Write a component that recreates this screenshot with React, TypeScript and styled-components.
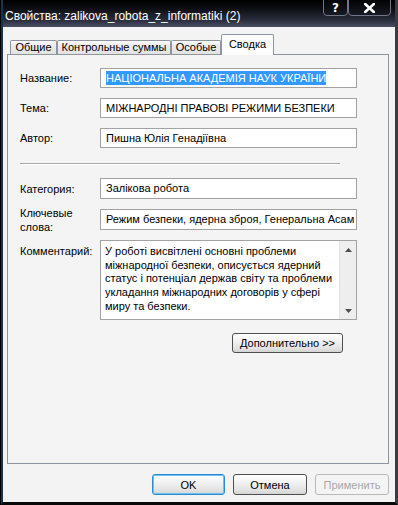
import React from 'react';
import styled, { createGlobalStyle } from 'styled-components';

const Global = createGlobalStyle`
  html, body { margin: 0; padding: 0; background: #000; }
  body {
    width: 398px; height: 505px; overflow: hidden;
    font-family: "Liberation Sans", Arial, sans-serif;
  }
  * { box-sizing: border-box; }
`;

const Win = styled.div`
  width: 398px;
  height: 505px;
  display: flex;
  flex-direction: column;
  background: #000;
  padding-left: 1px;
`;

const Frame = styled.div`
  flex: 1;
  display: flex;
  flex-direction: column;
  border-left: 2px solid #123650;
  border-right: 3px solid #3b3c40;
  border-bottom: 3px solid #0a0a0a;
  min-height: 0;
`;

const TitleBar = styled.div`
  height: 27px;
  flex: none;
  display: flex;
  align-items: flex-start;
  background: linear-gradient(#000 0%, #0c0d12 30%, #2a2d3c 75%, #4a4f66 100%);
  overflow: hidden;
`;

const TitleText = styled.div`
  flex: 1;
  padding: 9px 0 0 2px;
  font-size: 12px;
  line-height: 14px;
  color: #fff;
  white-space: nowrap;
`;

const CaptionGroup = styled.div`
  display: flex;
  margin-top: -3px;
  margin-right: 4px;
`;

const CaptionBtn = styled.div<{ $w: number }>`
  width: ${p => p.$w}px;
  height: 19px;
  display: flex;
  align-items: center;
  justify-content: center;
  padding-top: 3px;
  border: 1px solid #70758a;
  border-radius: 0 0 4px 4px;
  background: linear-gradient(#000, #181a24);
  color: #fff;
  font-family: "DejaVu Sans", sans-serif;
  font-weight: bold;
  font-size: 12px;
`;

const Client = styled.div`
  flex: 1;
  display: flex;
  flex-direction: column;
  background: #f3f3f3;
  padding: 7px 6px 7px 4px;
  min-height: 0;
`;

const TabStrip = styled.div`
  display: flex;
  align-items: flex-end;
  height: 20px;
  padding-left: 3px;
  position: relative;
  z-index: 1;
`;

const Tab = styled.div<{ $w: number; $active?: boolean }>`
  width: ${p => p.$w}px;
  height: ${p => (p.$active ? 21 : 14)}px;
  margin-bottom: ${p => (p.$active ? -1 : 0)}px;
  display: flex;
  justify-content: center;
  align-items: ${p => (p.$active ? 'flex-start' : 'center')};
  padding-top: ${p => (p.$active ? 3 : 0)}px;
  font-size: 11px;
  line-height: 13px;
  color: #000;
  border: 1px solid #8f95a0;
  border-bottom: none;
  border-radius: 2px 2px 0 0;
  background: ${p => (p.$active ? '#fcfcfc' : 'linear-gradient(#ffffff, #ededed 30%, #e2e2e2)')};
  white-space: nowrap;
`;

const Panel = styled.div`
  flex: 1;
  border: 1px solid #8f95a0;
  background: #f4f4f4;
  padding: 13px 0 0 12px;
  display: flex;
  flex-direction: column;
`;

const FieldGrid = styled.div`
  display: grid;
  grid-template-columns: 80px 257px;
  grid-auto-rows: 20px;
  row-gap: 10px;
  align-items: center;
`;

const Label = styled.div<{ $top?: number }>`
  font-size: 11px;
  line-height: 14px;
  color: #000;
  margin-top: ${p => p.$top ?? 0}px;
`;

const Field = styled.div<{ $h?: number; $top?: number }>`
  width: 257px;
  height: ${p => p.$h ?? 20}px;
  margin-top: ${p => p.$top ?? 0}px;
  border: 1px solid #a2a2a2;
  background: #fff;
  font-size: 11px;
  line-height: ${p => (p.$h ?? 20) - 2}px;
  padding: 0 5px;
  color: #000;
  white-space: nowrap;
  overflow: hidden;
`;

const Selected = styled.span`
  background: #3399ff;
  color: #fff;
  padding: 1px 0;
`;

const Separator = styled.div`
  width: 320px;
  height: 2px;
  margin: 15px 0 13px 0;
  border-top: 1px solid #a8a8a8;
  border-bottom: 1px solid #fff;
`;

const Row = styled.div<{ $top?: number; $align?: string }>`
  display: flex;
  align-items: ${p => p.$align ?? 'center'};
  margin-top: ${p => p.$top ?? 0}px;
`;

const LabelCell = styled.div`
  width: 80px;
  flex: none;
`;

const Memo = styled.div`
  width: 257px;
  height: 80px;
  border: 1px solid #a2a2a2;
  background: #fff;
  display: flex;
`;

const MemoText = styled.div`
  flex: 1;
  padding: 4px 0 0 4px;
  font-size: 11px;
  line-height: 13.7px;
  color: #000;
  white-space: nowrap;
  overflow: hidden;
`;

const ScrollBar = styled.div`
  width: 17px;
  flex: none;
  background: #eeeeee;
  border-left: 1px solid #e2e2e2;
  display: flex;
  flex-direction: column;
  justify-content: space-between;
  align-items: center;
  padding: 7px 0 6px 0;
`;

const MoreRow = styled.div`
  width: 337px;
  display: flex;
  justify-content: flex-end;
  padding-right: 14px;
  margin-top: 13px;
`;

const Btn = styled.button<{ $w: number; $kind?: 'default' | 'normal' | 'disabled' }>`
  width: ${p => p.$w}px;
  height: ${p => (p.$kind === undefined ? 20 : 21)}px;
  padding: 0;
  font-family: "Liberation Sans", Arial, sans-serif;
  font-size: 11px;
  border-radius: 3px;
  color: ${p => (p.$kind === 'disabled' ? '#a7a7a7' : '#000')};
  border: 1px solid
    ${p => (p.$kind === 'default' ? '#2a8bd0' : p.$kind === 'disabled' ? '#b9b9b9' : '#4f4f4f')};
  box-shadow: ${p => (p.$kind === 'default' ? 'inset 0 0 0 1px #6cc2f7' : 'none')};
  background: ${p =>
    p.$kind === 'disabled' ? '#f4f4f4' : 'linear-gradient(#ffffff, #f2f2f2 40%, #e2e2e2 80%, #d4d4d4)'};
`;

const ButtonBar = styled.div`
  display: flex;
  justify-content: flex-end;
  gap: 8px;
  margin-top: 10px;
`;

const Arrow = ({ up }: { up?: boolean }) => (
  <svg width="7" height="4" viewBox="0 0 7 4">
    <path d={up ? 'M0 4 L3.5 0 L7 4 Z' : 'M0 0 L3.5 4 L7 0 Z'} fill="#4d4d4d" />
  </svg>
);

const CloseGlyph = () => (
  <svg width="11" height="10" viewBox="0 0 11 10">
    <path d="M1.2 1 L9.8 9 M9.8 1 L1.2 9" stroke="#fff" strokeWidth="2.6" strokeLinecap="square" />
  </svg>
);

export default function App() {
  return (
    <>
      <Global />
      <Win>
        <Frame>
          <TitleBar>
            <TitleText>Свойства: zalikova_robota_z_informatiki (2)</TitleText>
            <CaptionGroup>
              <CaptionBtn $w={25}>?</CaptionBtn>
              <CaptionBtn $w={43}>
                <CloseGlyph />
              </CaptionBtn>
            </CaptionGroup>
          </TitleBar>
          <Client>
            <TabStrip>
              <Tab $w={47}>Общие</Tab>
              <Tab $w={114}>Контрольные суммы</Tab>
              <Tab $w={50}>Особые</Tab>
              <Tab $w={53} $active>
                Сводка
              </Tab>
            </TabStrip>
            <Panel>
              <FieldGrid>
                <Label>Название:</Label>
                <Field>
                  <Selected>НАЦІОНАЛЬНА АКАДЕМІЯ НАУК УКРАЇНИ</Selected>
                </Field>
                <Label>Тема:</Label>
                <Field>МІЖНАРОДНІ ПРАВОВІ РЕЖИМИ БЕЗПЕКИ</Field>
                <Label>Автор:</Label>
                <Field>Пишна Юлія Генадіївна</Field>
              </FieldGrid>
              <Separator />
              <Row>
                <LabelCell>
                  <Label>Категория:</Label>
                </LabelCell>
                <Field $h={21}>Залікова робота</Field>
              </Row>
              <Row $top={7} $align="flex-start">
                <LabelCell>
                  <Label>
                    Ключевые
                    <br />
                    слова:
                  </Label>
                </LabelCell>
                <Field $h={21} $top={3}>
                  Режим безпеки, ядерна зброя, Генеральна Асам
                </Field>
              </Row>
              <Row $top={6} $align="flex-start">
                <LabelCell>
                  <Label $top={4}>Комментарий:</Label>
                </LabelCell>
                <Memo>
                  <MemoText>
                    У роботі висвітлені основні проблеми
                    <br />
                    міжнародної безпеки, описується ядерний
                    <br />
                    статус і потенціал держав світу та проблеми
                    <br />
                    укладання міжнародних договорів у сфері
                    <br />
                    миру та безпеки.
                  </MemoText>
                  <ScrollBar>
                    <Arrow up />
                    <Arrow />
                  </ScrollBar>
                </Memo>
              </Row>
              <MoreRow>
                <Btn $w={111}>Дополнительно &gt;&gt;</Btn>
              </MoreRow>
            </Panel>
            <ButtonBar>
              <Btn $w={73} $kind="default">
                OK
              </Btn>
              <Btn $w={74} $kind="normal">
                Отмена
              </Btn>
              <Btn $w={74} $kind="disabled">
                Применить
              </Btn>
            </ButtonBar>
          </Client>
        </Frame>
      </Win>
    </>
  );
}
